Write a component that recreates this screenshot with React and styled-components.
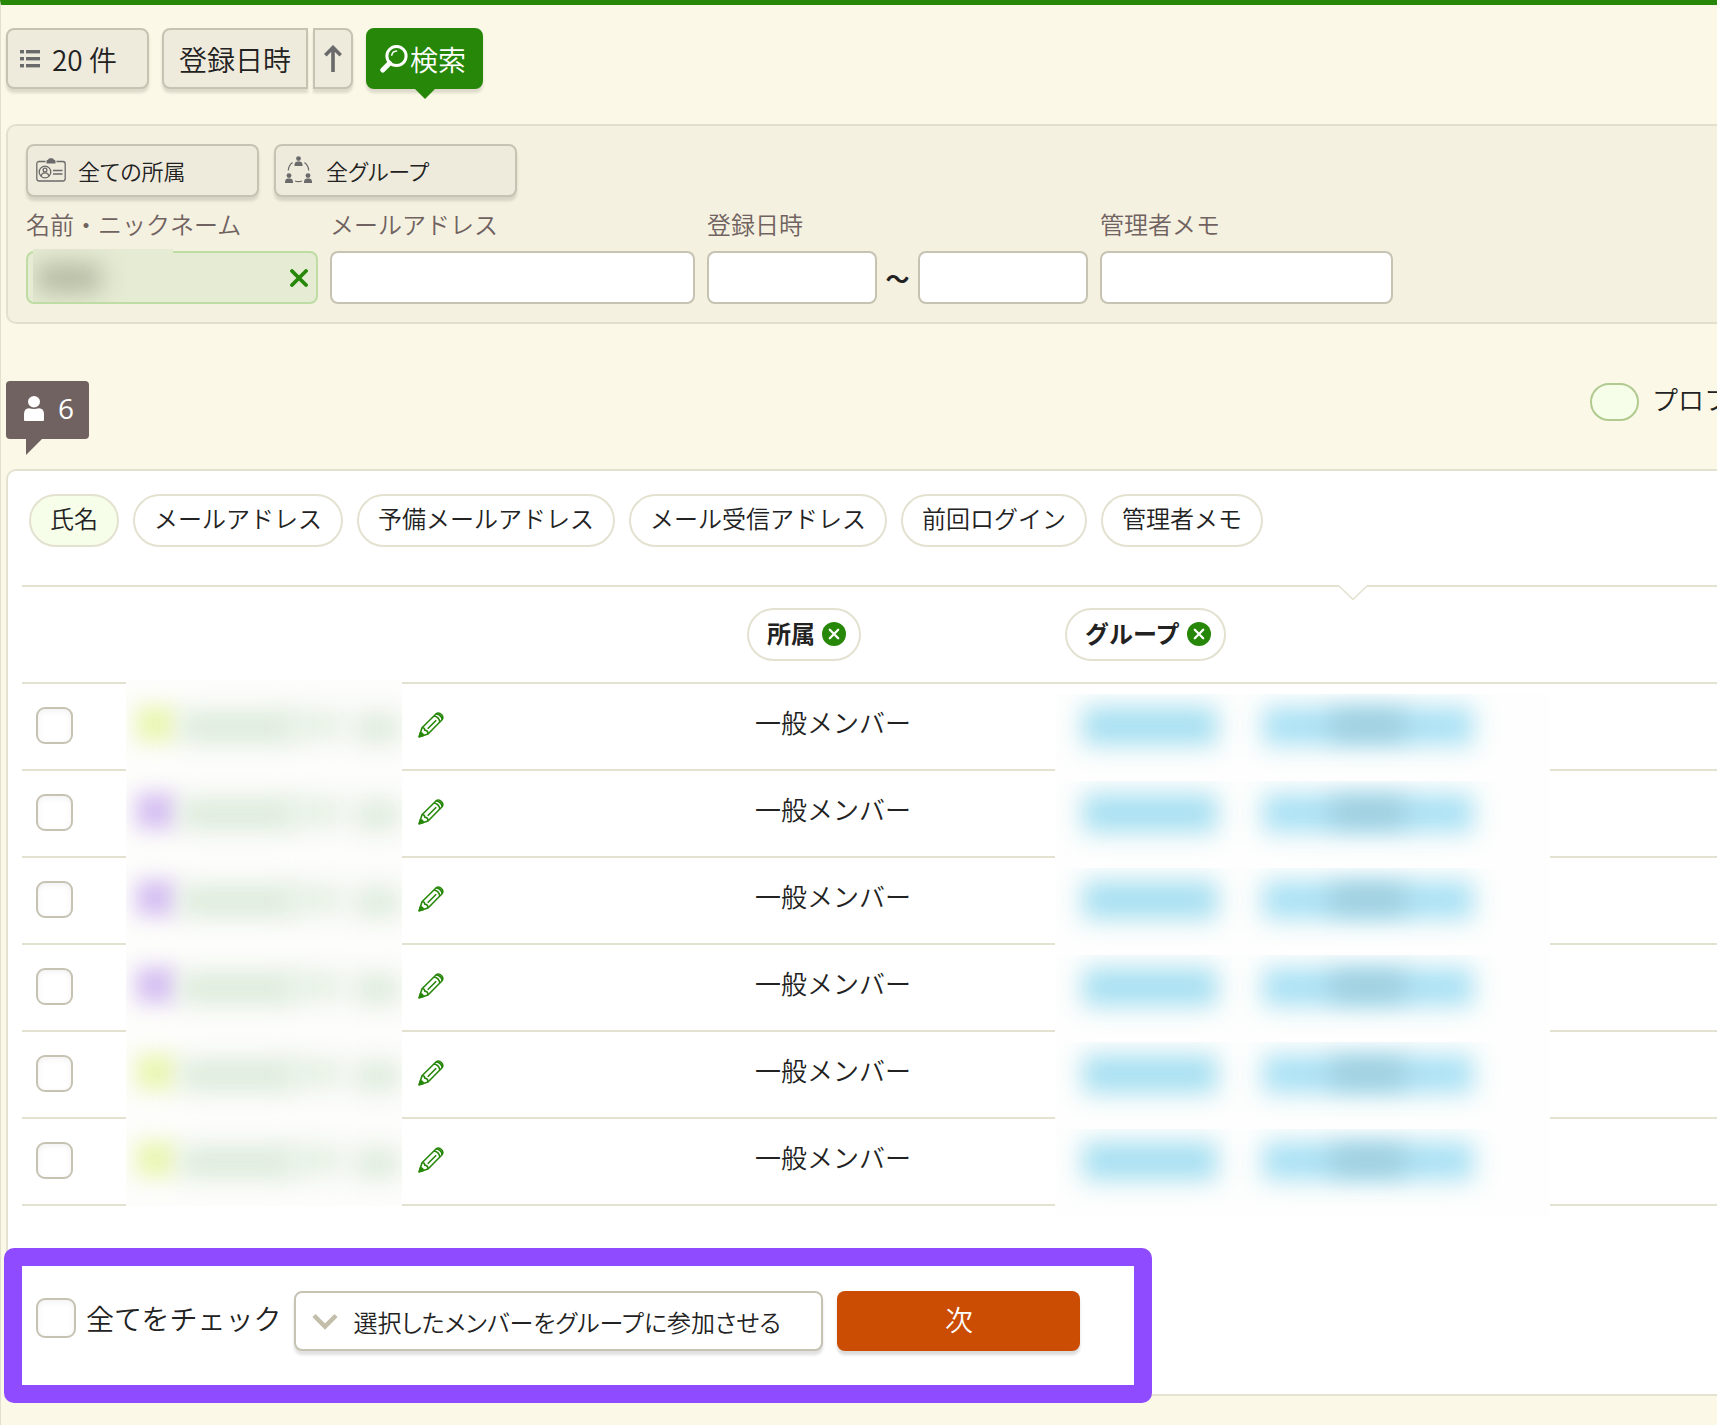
import React, { useState } from "react"
import styled, { createGlobalStyle } from "styled-components"

const GlobalStyle = createGlobalStyle`
    *, *::before, *::after {
        box-sizing: border-box;
    }
    body {
        margin: 0;
        background-color: #fcf8e7;
        color: #222;
        font-family: "Noto Sans CJK JP", sans-serif;
        font-size: 24px;
        font-weight: 350;
        overflow-x: hidden;
    }
    button, input, select {
        font-family: inherit;
        font-weight: inherit;
        color: inherit;
    }
`

const Page = styled.div`
    min-height: 100vh;
    padding: 23px 0 22px 5px;
    border-top: 5px solid #268709;
    border-left: 1px solid #e3dfcf;
    overflow: hidden;
`

const Toolbar = styled.div`
    display: flex;
    gap: 13px;
    margin-bottom: 35px;
`

const Split = styled.div`
    display: flex;
    gap: 5px;
`

const ToolButton = styled.button`
    display: flex;
    align-items: center;
    height: 61px;
    padding: ${p => p.$pad || "0 14px"};
    gap: 12px;
    border: 2px solid #c6c3b3;
    border-radius: ${p => p.$radius || "8px"};
    background-color: #efebdc;
    box-shadow: 0 4px 3px rgba(0, 0, 0, .12);
    font-size: 28px;
    line-height: 40px;
    cursor: pointer;
`

const SearchButton = styled(ToolButton)`
    position: relative;
    gap: 2px;
    border-color: #268709;
    background-color: #268709;
    color: #fff;
    &::after {
        content: "";
        position: absolute;
        top: 100%;
        left: 50%;
        margin-left: -12px;
        border: 12px solid transparent;
        border-top-color: #268709;
        border-bottom: 0;
    }
`

const Filters = styled.form`
    padding: 18px;
    margin-bottom: 57px;
    border: 2px solid #e2e0cd;
    border-right: 0;
    border-radius: 10px 0 0 10px;
    background-color: #f5f1e0;
`

const FilterButtons = styled.div`
    display: flex;
    gap: 15px;
    margin-bottom: 10px;
`

const FilterButton = styled(ToolButton)`
    width: ${p => p.$width};
    height: 53px;
    padding: 0 8px 2px;
    font-size: 22px;
    font-feature-settings: "palt";
`

const Fields = styled.div`
    display: flex;
    gap: 12px;
`

const Field = styled.div`
    display: flex;
    flex-direction: column;
    gap: 10px;
    width: ${p => p.$width};
    label {
        color: #706260;
        line-height: 34px;
        white-space: nowrap;
    }
`

const Range = styled.div`
    display: flex;
    align-items: center;
    justify-content: space-between;
    font-weight: 700;
    line-height: 36px;
`

const InputBox = styled.div`
    position: relative;
    display: flex;
`

const TextInput = styled.input`
    width: ${p => p.$width || "100%"};
    height: 53px;
    padding: 0 12px;
    border: 2px solid ${p => p.$filled ? "#bddda5" : "#c6c3b3"};
    border-radius: 8px;
    background-color: ${p => p.$filled ? "#e6ebd3" : "#fff"};
    font-size: 24px;
`

const ClearButton = styled.button`
    position: absolute;
    top: 16px;
    right: 8px;
    display: flex;
    padding: 2px;
    border: 0;
    background: none;
    cursor: pointer;
`

const HiddenValue = styled.span`
    position: absolute;
    top: -2px;
    left: 7px;
    width: 140px;
    height: 53px;
    overflow: hidden;
    background-color: #e6ebd3;
    &::before {
        content: "";
        position: absolute;
        top: 15px;
        left: 4px;
        width: 64px;
        height: 28px;
        background-color: #b3b8a1;
        filter: blur(12px);
    }
`

const Summary = styled.div`
    display: flex;
    justify-content: space-between;
    margin-bottom: 30px;
`

const Count = styled.div`
    position: relative;
    display: flex;
    align-items: center;
    gap: 14px;
    height: 58px;
    padding: 0 15px 4px 18px;
    border-radius: 4px;
    background-color: #706260;
    color: #fff;
    font-family: "Open Sans", sans-serif;
    font-size: 28px;
    font-weight: 400;
    &::after {
        content: "";
        position: absolute;
        top: 100%;
        left: 20px;
        border-top: 16px solid #706260;
        border-right: 16px solid transparent;
    }
`

const Legend = styled.div`
    display: flex;
    gap: 13px;
    width: 127px;
    padding-top: 2px;
    font-size: 26px;
    line-height: 32px;
    white-space: nowrap;
`

const Swatch = styled.span`
    flex: none;
    width: 49px;
    height: 38px;
    border: 2px solid #b0ca8f;
    border-radius: 19px;
    background-color: #f6fde9;
`

const Panel = styled.section`
    padding: 23px 0 9px 14px;
    border: 2px solid #e3e1d0;
    border-right: 0;
    border-radius: 10px 0 0 10px;
    background-color: #fff;
`

const Pills = styled.div`
    display: flex;
    gap: 14px;
    padding-left: 7px;
    margin-bottom: 38px;
`

const pillBox = `
    height: 53px;
    padding: 0 19px 6px;
    border: 2px solid #e3e1d0;
    border-radius: 27px;
    font-size: 24px;
    line-height: 36px;
    white-space: nowrap;
`

const Pill = styled.button`
    ${pillBox}
    background-color: ${p => p.$active ? "#f6fde9" : "#fff"};
    cursor: pointer;
`

const HeadPill = styled.span`
    ${pillBox}
    display: inline-flex;
    align-items: flex-start;
    gap: 7px;
    padding: 5px 13px 0 18px;
    font-weight: 700;
`

const RemoveButton = styled.button`
    display: flex;
    padding: 7px 0 0;
    border: 0;
    background: none;
    cursor: pointer;
`

const TableWrap = styled.div`
    position: relative;
`

const Notch = styled.svg`
    position: absolute;
    top: 0;
    left: 1317px;
`

const Table = styled.table`
    width: 100%;
    table-layout: fixed;
    border-collapse: separate;
    border-spacing: 0;
    th, td {
        padding: 0;
        border-bottom: 2px solid #e3e1d0;
        text-align: left;
    }
    th {
        height: 99px;
        border-top: 2px solid #e3e1d0;
        vertical-align: middle;
    }
    td {
        position: relative;
        height: 87px;
    }
`

const Col = styled.col`
    width: ${p => p.$width};
`

const Checkbox = styled.input`
    appearance: none;
    display: block;
    flex: none;
    width: ${p => p.$size || "37px"};
    height: ${p => p.$size || "37px"};
    margin: ${p => p.$margin || "0"};
    border: 2px solid #c6c3b3;
    border-radius: 9px;
    background-color: #fff;
    box-shadow: inset 0 2px 6px rgba(0, 0, 0, .06);
    cursor: pointer;
`

const EditLink = styled.a`
    display: block;
    width: 26px;
    height: 26px;
    margin: 0 0 8px 292px;
`

const Role = styled.div`
    padding: 0 0 10px 8px;
    font-size: 26px;
    line-height: 36px;
`

const Mask = styled.div`
    position: absolute;
    overflow: hidden;
`

const NameMask = styled(Mask)`
    top: -4px;
    left: 0;
    width: 276px;
    height: 91px;
    background-color: #fdfdfb;
`

const GroupMask = styled(Mask)`
    top: 10px;
    left: -10px;
    width: 495px;
    height: 87px;
    background-color: #fdfefd;
`

const Smudge = styled.span`
    position: absolute;
    top: ${p => p.$top};
    left: ${p => p.$left};
    width: ${p => p.$width};
    height: ${p => p.$height || "36px"};
    background-color: ${p => p.$color};
    filter: blur(${p => p.$blur || "12px"});
`

const Actions = styled.div`
    position: relative;
    display: flex;
    align-items: flex-start;
    width: fit-content;
    margin-top: 60px;
    padding: 25px 54px 34px 14px;
    &::after {
        content: "";
        position: absolute;
        inset: -18px;
        border: 18px solid #8f4bff;
        border-radius: 10px;
        pointer-events: none;
    }
`

const CheckAll = styled.label`
    display: flex;
    align-items: center;
    gap: 10px;
    height: 54px;
    margin-right: 13px;
    font-size: 28px;
    line-height: 40px;
    white-space: nowrap;
`

const SelectBox = styled.div`
    position: relative;
    margin-right: 14px;
    svg {
        position: absolute;
        top: 22px;
        left: 18px;
        pointer-events: none;
    }
`

const Select = styled.select`
    appearance: none;
    width: 529px;
    height: 60px;
    padding: 0 10px 0 57px;
    border: 2px solid #c6c3b3;
    border-radius: 8px;
    background-color: #fff;
    box-shadow: 0 4px 3px rgba(0, 0, 0, .12);
    font-size: 24px;
    font-feature-settings: "palt";
`

const NextButton = styled.button`
    width: 243px;
    height: 60px;
    padding: 0 0 4px;
    border: 0;
    border-radius: 8px;
    background-color: #ca4d03;
    box-shadow: 0 4px 3px rgba(0, 0, 0, .14);
    color: #fff;
    font-size: 28px;
    cursor: pointer;
`

const ListIcon = () => <svg width="20" height="18" viewBox="0 0 20 18" fill="#6a6a6a" aria-hidden="true">
    {[0, 7, 14].map(y => <g key={y}>
        <rect x="0" y={y} width="4" height="3.4" />
        <rect x="6" y={y} width="14" height="3.4" />
    </g>)}
</svg>

const ArrowIcon = () => <svg width="18" height="27" viewBox="0 0 18 27" fill="none" stroke="#6a6a6a" strokeWidth="3.6" aria-hidden="true">
    <path d="M9 27V3M1.3 10.2 9 2.5l7.700 7.700" />
</svg>

const SearchIcon = () => <svg width="28" height="28" viewBox="0 0 28 28" fill="none" stroke="#fff" strokeLinecap="round" aria-hidden="true">
    <circle cx="16.500" cy="11" r="9.600" strokeWidth="3" />
    <path d="M9.500 18.300 2.800 25" strokeWidth="5" />
    <path d="M11.800 10.200a5.200 5.200 0 0 1 4.800-4.200" strokeWidth="1.500" />
</svg>

const BadgeIcon = () => <svg width="30" height="24" viewBox="0 0 30 24" fill="none" stroke="#6a6a6a" strokeWidth="1.300" aria-hidden="true">
    <path d="M9.500 3.500H3.200Q.8 3.500.8 6v14.500Q.8 23 3.200 23h23.600q2.400 0 2.400-2.500V6q0-2.500-2.400-2.500h-6.300" />
    <path d="M10.500 5.500V3q0-1 1.500-1.200Q12.500.3 14 .3h2q1.500 0 2 1.500 1.500.2 1.500 1.200v2.500z" fill="#6a6a6a" stroke="none" />
    <circle cx="9" cy="14" r="5.800" />
    <circle cx="9" cy="12" r="1.900" />
    <path d="M5.300 18q.2-3.200 3.700-3.200t3.700 3.200M17 12.500h9.500M17 16h9.500" />
</svg>

const GroupIcon = () => <svg width="30" height="27" viewBox="-1 0 30 27" fill="#6a6a6a" aria-hidden="true">
    {[[13.5, 0], [4, 17], [23, 17]].map(([x, y]) => <g key={x} transform={`translate(${x} ${y})`}>
        <circle cx="0" cy="2.600" r="2.400" />
        <path d="M-4 10V8.500Q-4 6-1.500 5.500h3Q4 6 4 8.500V10z" />
    </g>)}
    <path d="M7.500 6.500Q3.500 9.500 3.300 14.500M19.500 6.500q4 3 4.200 8M10 25q3.500 1.200 7 0" fill="none" stroke="#6a6a6a" strokeWidth="1.200" />
</svg>

const PersonIcon = () => <svg width="20" height="25" viewBox="0 0 20 25" fill="#fff" aria-hidden="true">
    <ellipse cx="10" cy="5.700" rx="6" ry="5.700" />
    <path d="M0 24v-6q0-5.500 5-5.800 5 1.600 10 0 5 .3 5 5.800v6q0 1-1 1H1q-1 0-1-1z" />
</svg>

const ClearIcon = () => <svg width="18" height="18" viewBox="0 0 18 18" stroke="#268709" strokeWidth="3.800" strokeLinecap="round" aria-hidden="true">
    <path d="M2 2l14 14M16 2 2 16" />
</svg>

const RemoveIcon = () => <svg width="24" height="24" viewBox="0 0 24 24" aria-hidden="true">
    <circle cx="12" cy="12" r="12" fill="#268709" />
    <path d="M7.800 7.800l8.400 8.400M16.200 7.800l-8.400 8.400" stroke="#fff" strokeWidth="2.300" strokeLinecap="round" />
</svg>

const PencilIcon = () => <svg width="26" height="26" viewBox="0 0 26 26" fill="none" stroke="#268709" strokeWidth="1.600" strokeLinejoin="round" aria-hidden="true">
    <path d="M1.200 24.800 4 15.800 17.700 2.200q3-2.500 5.700.3 2.800 2.900.2 5.800L10 22z" />
    <path d="M4 15.800q2.600-.4 2.700 2.300 3.300.2 3.300 3.900M16 4q5 .8 5.800 6M18.300 1.900q5.200.9 5.800 5.700M9.700 16.800l8.500-8.500" />
    <path d="M1.200 24.800 2.500 20.500q2.500.5 3 2.900z" fill="#268709" />
</svg>

const ChevronIcon = () => <svg width="26" height="17" viewBox="0 0 26 17" fill="none" stroke="#c2beaa" strokeWidth="4.500" aria-hidden="true">
    <path d="M2 2.500l11 11 11-11" />
</svg>

const columns = ["氏名", "メールアドレス", "予備メールアドレス", "メール受信アドレス", "前回ログイン", "管理者メモ"]

const LIME = "#eaf6b4"
const PURPLE = "#d6c0f2"
const members = [LIME, PURPLE, PURPLE, PURPLE, LIME, LIME].map((tag, id) => ({ id, tag, role: "一般メンバー" }))

const MemberRow = ({ member, checked, onCheck }) => <tr>
    <td>
        <Checkbox type="checkbox" aria-label="選択" $margin="0 0 2px 14px" checked={checked} onChange={onCheck} />
    </td>
    <td>
        <NameMask>
            <Smudge $top="26px" $left="10px" $width="40px" $color={member.tag} $blur="10px" />
            <Smudge $top="31px" $left="54px" $width="114px" $height="32px" $color="#dcebdb" />
            <Smudge $top="30px" $left="160px" $width="56px" $height="30px" $color="#e5f0e4" />
            <Smudge $top="32px" $left="228px" $width="46px" $height="32px" $color="#dfecde" />
        </NameMask>
        <EditLink href="#edit" aria-label="編集"><PencilIcon /></EditLink>
    </td>
    <td><Role>{member.role}</Role></td>
    <td>
        <GroupMask>
            <Smudge $top="13px" $left="28px" $width="134px" $height="38px" $color="#a6dff1" />
            <Smudge $top="13px" $left="208px" $width="210px" $height="38px" $color="#a9e1f4" />
            <Smudge $top="18px" $left="276px" $width="74px" $height="26px" $color="#9fccdb" />
        </GroupMask>
    </td>
</tr>

export default () => {
    const [selected, setSelected] = useState([])

    const toggle = id => setSelected(selected.includes(id) ? selected.filter(item => item !== id) : [...selected, id])
    const toggleAll = e => setSelected(e.target.checked ? members.map(item => item.id) : [])

    return <>
        <GlobalStyle />
        <Page>
            <Toolbar>
                <ToolButton $pad="0 30px 0 12px"><ListIcon />20 件</ToolButton>
                <Split>
                    <ToolButton $pad="0 15px" $radius="8px 0 0 8px">登録日時</ToolButton>
                    <ToolButton $pad="0 9px" $radius="0 8px 8px 0" aria-label="昇順"><ArrowIcon /></ToolButton>
                </Split>
                <SearchButton $pad="0 15px 0 12px"><SearchIcon />検索</SearchButton>
            </Toolbar>

            <Filters onSubmit={e => e.preventDefault()}>
                <FilterButtons>
                    <FilterButton type="button" $width="233px"><BadgeIcon />全ての所属</FilterButton>
                    <FilterButton type="button" $width="243px"><GroupIcon />全グループ</FilterButton>
                </FilterButtons>
                <Fields>
                    <Field $width="292px">
                        <label htmlFor="name">名前・ニックネーム</label>
                        <InputBox>
                            <TextInput id="name" $filled />
                            <HiddenValue />
                            <ClearButton type="button" aria-label="クリア"><ClearIcon /></ClearButton>
                        </InputBox>
                    </Field>
                    <Field $width="365px">
                        <label htmlFor="mail">メールアドレス</label>
                        <TextInput id="mail" />
                    </Field>
                    <Field $width="381px">
                        <label htmlFor="from">登録日時</label>
                        <Range>
                            <TextInput id="from" $width="170px" />
                            ～
                            <TextInput aria-label="登録日時" $width="170px" />
                        </Range>
                    </Field>
                    <Field $width="293px">
                        <label htmlFor="memo">管理者メモ</label>
                        <TextInput id="memo" />
                    </Field>
                </Fields>
            </Filters>

            <Summary>
                <Count><PersonIcon />{members.length}</Count>
                <Legend><Swatch />プロフ</Legend>
            </Summary>

            <Panel>
                <Pills>
                    {columns.map((name, index) => <Pill key={name} $active={index === 0}>{name}</Pill>)}
                </Pills>
                <TableWrap>
                    <Table>
                        <colgroup>
                            <Col $width="104px" />
                            <Col $width="621px" />
                            <Col $width="318px" />
                            <Col />
                        </colgroup>
                        <thead>
                            <tr>
                                <th />
                                <th />
                                <th><HeadPill>所属<RemoveButton aria-label="所属を外す"><RemoveIcon /></RemoveButton></HeadPill></th>
                                <th><HeadPill>グループ<RemoveButton aria-label="グループを外す"><RemoveIcon /></RemoveButton></HeadPill></th>
                            </tr>
                        </thead>
                        <tbody>
                            {members.map(member => <MemberRow
                                key={member.id}
                                member={member}
                                checked={selected.includes(member.id)}
                                onCheck={() => toggle(member.id)}
                            />)}
                        </tbody>
                    </Table>
                    <Notch width="28" height="16" viewBox="0 0 28 16" aria-hidden="true">
                        <path d="M0 0h28v2L14 15.500 0 2z" fill="#fff" />
                        <path d="M0 1l14 13.500L28 1" fill="none" stroke="#e3e1d0" strokeWidth="1.600" />
                    </Notch>
                </TableWrap>
                <Actions>
                    <CheckAll>
                        <Checkbox
                            type="checkbox"
                            $size="40px"
                            checked={selected.length === members.length}
                            onChange={toggleAll}
                        />
                        全てをチェック
                    </CheckAll>
                    <SelectBox>
                        <Select aria-label="操作">
                            <option>選択したメンバーをグループに参加させる</option>
                        </Select>
                        <ChevronIcon />
                    </SelectBox>
                    <NextButton>次</NextButton>
                </Actions>
            </Panel>
        </Page>
    </>
}
